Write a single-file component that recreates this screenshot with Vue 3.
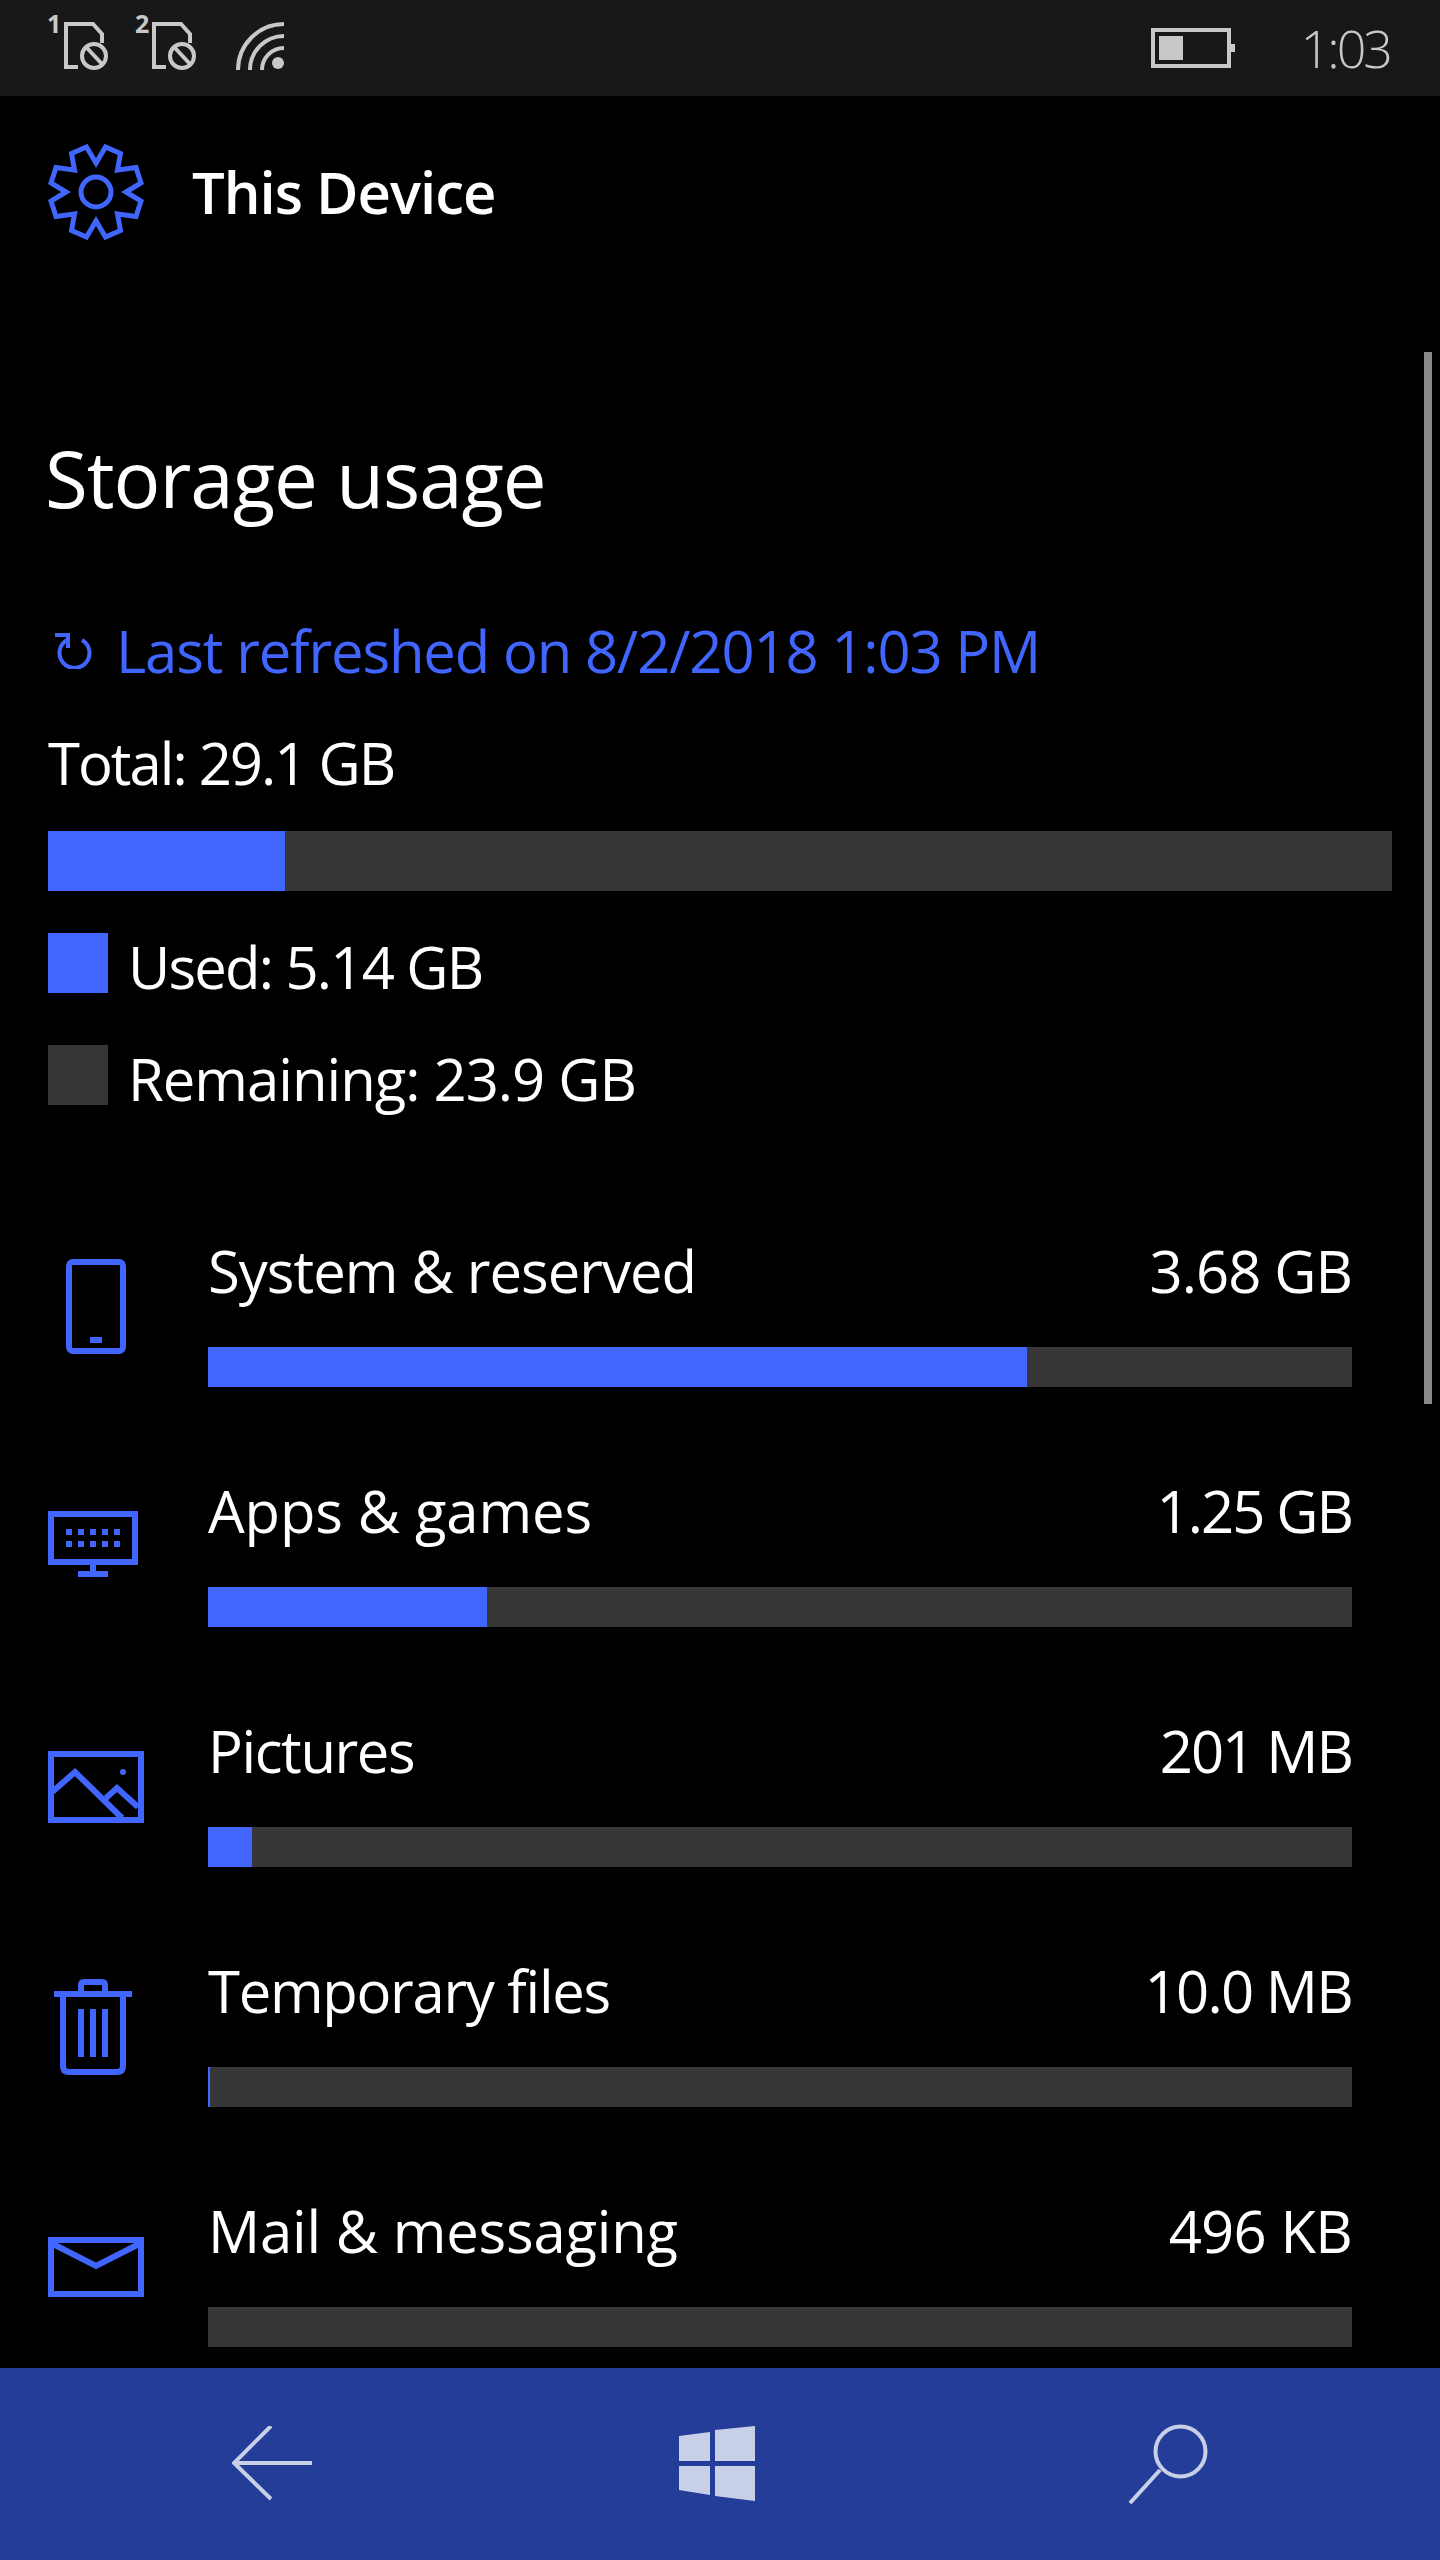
<script setup>
const rows = [
  { name: 'System & reserved', size: '3.68 GB', fill: 819, icon: 'phone', spacing: '-1px', sizeSpacing: '-1px' },
  { name: 'Apps & games', size: '1.25 GB', fill: 279, icon: 'apps', spacing: '-0.1px', sizeSpacing: '-2px' },
  { name: 'Pictures', size: '201 MB', fill: 44, icon: 'pictures', spacing: '-1.4px', sizeSpacing: '-2px' },
  { name: 'Temporary files', size: '10.0 MB', fill: 2, icon: 'trash', spacing: '-1.3px', sizeSpacing: '-1.7px' },
  { name: 'Mail & messaging', size: '496 KB', fill: 0, icon: 'mail', spacing: '-0.2px', sizeSpacing: '-0.7px' }
]
</script>

<template>
  <div class="phone">
    <!-- Status bar -->
    <div class="status-bar">
      <div class="status-left">
        <svg v-for="n in 2" :key="n" class="sim" width="64" height="96" viewBox="0 -16 64 96">
          <text x="1" y="17" class="sim-num">{{ n }}</text>
          <path d="M32 51H20V8H47L56 18V27" />
          <circle cx="48" cy="40" r="12" />
          <path d="M41 32L56 48" />
        </svg>
        <svg class="wifi" width="48" height="48" viewBox="0 0 48 48">
          <path d="M2 48A46 46 0 0 1 48 2M14 48A34 34 0 0 1 48 14M26 48A22 22 0 0 1 48 26" />
          <circle cx="42" cy="41" r="6" />
        </svg>
      </div>
      <div class="status-right">
        <div class="battery"><div class="battery-level"></div></div>
        <div class="time">1:03</div>
      </div>
    </div>

    <!-- Page body -->
    <div class="content">
      <div class="page-header">
        <svg class="gear" width="96" height="96" viewBox="-48 -48 96 96">
          <path d="M0 -29L-9.5 -45L-24.5 -38.5L-21.5 -22L-40 -24.5L-45 -9L-30 0L-45 9L-40 24.5L-21.5 22L-24.5 38.5L-9.5 45L0 29L9.5 45L24.5 38.5L21.5 22L40 24.5L45 9L30 0L45 -9L40 -24.5L21.5 -22L24.5 -38.5L9.5 -45Z" />
          <circle r="15" />
        </svg>
        <div class="device-name">This Device</div>
      </div>

      <h1 class="page-title">Storage usage</h1>

      <div class="refresh-row">
        <svg class="refresh" width="38" height="36" viewBox="0 0 38 36">
          <path d="M27 7A15 15 0 1 1 12 7M0 2H13V15" />
        </svg>
        <span>Last refreshed on 8/2/2018 1:03 PM</span>
      </div>

      <div class="total">Total: 29.1 GB</div>
      <div class="total-bar"><div class="total-used"></div></div>

      <div class="legend-row tight">
        <div class="swatch used"></div>
        <span>Used: 5.14 GB</span>
      </div>
      <div class="legend-row second">
        <div class="swatch"></div>
        <span>Remaining: 23.9 GB</span>
      </div>

      <div class="usage-list">
        <div v-for="row in rows" :key="row.name" class="usage-row">
          <svg class="usage-icon" width="208" height="240" viewBox="0 0 208 240">
            <template v-if="row.icon === 'phone'">
              <rect x="69" y="35" width="54" height="89" rx="4" />
              <rect class="solid" x="90" y="110" width="12" height="6" />
            </template>
            <template v-if="row.icon === 'apps'">
              <rect x="51" y="47" width="84" height="48" />
              <path d="M93 98V104M78 107H108" />
              <path d="M66 65h6M78 65h6M90 65h6M102 65h6M114 65h6M66 77h6M78 77h6M90 77h6M102 77h6M114 77h6" />
            </template>
            <template v-if="row.icon === 'pictures'">
              <rect x="51" y="47" width="90" height="66" />
              <path d="M51 86L75 65L122 111M106 91L117 81L138 100" />
              <ellipse class="solid" cx="123" cy="65" rx="3" ry="3" />
            </template>
            <template v-if="row.icon === 'trash'">
              <path d="M54 47H132M63 47V119Q63 125 69 125H117Q123 125 123 119V47M81 44V38Q81 35 84 35H102Q105 35 105 38V44" />
              <path d="M81 62V110M93 62V110M105 62V110" />
            </template>
            <template v-if="row.icon === 'mail'">
              <rect x="51" y="53" width="90" height="54" />
              <path d="M51 56L96 79L141 56" />
            </template>
          </svg>
          <div class="usage-main">
            <div class="usage-text">
              <span :style="{ letterSpacing: row.spacing }">{{ row.name }}</span>
              <span :style="{ letterSpacing: row.sizeSpacing }">{{ row.size }}</span>
            </div>
            <div class="usage-bar">
              <div class="usage-fill" :style="{ width: row.fill + 'px' }"></div>
            </div>
          </div>
        </div>
      </div>

      <div class="scrollbar"></div>
    </div>

    <!-- Navigation buttons -->
    <div class="nav-bar">
      <svg width="80" height="76" viewBox="0 0 80 76">
        <path d="M39 0L2 37L39 73M2 37H80" />
      </svg>
      <svg class="win" width="76" height="76" viewBox="0 0 76 76">
        <path d="M0 10L31 6V35H0ZM36 4L76 0V35H36ZM0 40H31V69L0 64ZM36 40H76V75L36 70Z" />
      </svg>
      <svg width="80" height="80" viewBox="0 0 80 80">
        <circle cx="52.5" cy="27.5" r="25" />
        <path d="M32 46L2 79" />
      </svg>
    </div>
  </div>
</template>

<style>
body {
  background: #000;
}
</style>

<style scoped>
.phone {
  width: 1440px;
  height: 2560px;
  display: flex;
  flex-direction: column;
  background: #000;
  color: #fff;
  font-family: "Open Sans", "Noto Sans", sans-serif;
  font-size: 58px;
  letter-spacing: -1px;
}

.status-bar {
  height: 96px;
  flex-shrink: 0;
  background: #181818;
  display: flex;
  justify-content: space-between;
  align-items: center;
  padding: 0 50px 0 46px;
}

.status-left {
  display: flex;
  align-items: center;
  gap: 24px;
}

.sim {
  fill: none;
  stroke: #c8c8c8;
  stroke-width: 4;
}

.sim-num {
  fill: #c8c8c8;
  stroke: none;
  font-size: 25px;
  font-weight: 700;
  letter-spacing: 0;
}

.wifi {
  fill: none;
  stroke: #c8c8c8;
  stroke-width: 4;
  margin: 0 0 4px 14px;
}

.wifi circle {
  fill: #c8c8c8;
  stroke: none;
}

.status-right {
  display: flex;
  align-items: center;
  gap: 70px;
}

.battery {
  position: relative;
  width: 80px;
  height: 40px;
  box-sizing: border-box;
  border: 4px solid #c8c8c8;
  padding: 4px;
}

.battery::after {
  content: "";
  position: absolute;
  right: -8px;
  top: 12px;
  width: 4px;
  height: 8px;
  background: #c8c8c8;
}

.battery-level {
  width: 24px;
  height: 24px;
  background: #c8c8c8;
}

.time {
  font-size: 52px;
  font-weight: 300;
  letter-spacing: -3px;
  color: #c8c8c8;
  line-height: 60px;
}

.content {
  position: relative;
  flex: 1;
  overflow: hidden;
  padding-left: 48px;
}

.page-header {
  display: flex;
  align-items: center;
  gap: 48px;
  height: 96px;
  margin-top: 48px;
}

.gear {
  fill: none;
  stroke: #4066ff;
  stroke-width: 5;
}

.device-name {
  font-weight: 600;
  line-height: 96px;
}

.page-title {
  margin: 188px 0 0 -3px;
  font-size: 78px;
  font-weight: 400;
  line-height: 100px;
}

.refresh-row {
  display: flex;
  align-items: center;
  gap: 23px;
  margin: 83px 0 0 7px;
  color: #4066ff;
  line-height: 80px;
  letter-spacing: -1.15px;
}

.refresh {
  fill: none;
  stroke: #4066ff;
  stroke-width: 4;
}

.total {
  margin-top: 32px;
  line-height: 80px;
  letter-spacing: -2px;
}

.total-bar {
  width: 1344px;
  height: 60px;
  margin-top: 28px;
  background: #363636;
}

.total-used {
  width: 237px;
  height: 100%;
  background: #4066ff;
}

.legend-row {
  display: flex;
  align-items: center;
  gap: 20px;
  height: 60px;
  margin-top: 42px;
}

.legend-row span {
  margin-top: 6px;
}

.legend-row.tight {
  letter-spacing: -1.8px;
}

.legend-row.second {
  margin-top: 52px;
}

.swatch {
  width: 60px;
  height: 60px;
  background: #363636;
}

.swatch.used {
  background: #4066ff;
}

.usage-list {
  margin: 122px 0 0 -48px;
}

.usage-row {
  display: flex;
  height: 240px;
}

.usage-icon {
  flex-shrink: 0;
  fill: none;
  stroke: #4066ff;
  stroke-width: 6;
}

.usage-icon .solid {
  fill: #4066ff;
  stroke: none;
}

.usage-main {
  width: 1144px;
  padding-top: 4px;
}

.usage-text {
  display: flex;
  justify-content: space-between;
  line-height: 80px;
}

.usage-bar {
  height: 40px;
  margin-top: 36px;
  background: #363636;
}

.usage-fill {
  height: 100%;
  background: #4066ff;
}

.scrollbar {
  position: absolute;
  right: 8px;
  top: 256px;
  width: 8px;
  height: 1052px;
  background: #888;
}

.nav-bar {
  height: 192px;
  flex-shrink: 0;
  background: #243d99;
  display: flex;
  justify-content: space-between;
  align-items: center;
  padding: 0 232px;
}

.nav-bar svg {
  fill: none;
  stroke: #c8d0e8;
  stroke-width: 4;
}

.nav-bar .win {
  fill: #c8d0e8;
  stroke: none;
  margin-right: 6px;
}
</style>
